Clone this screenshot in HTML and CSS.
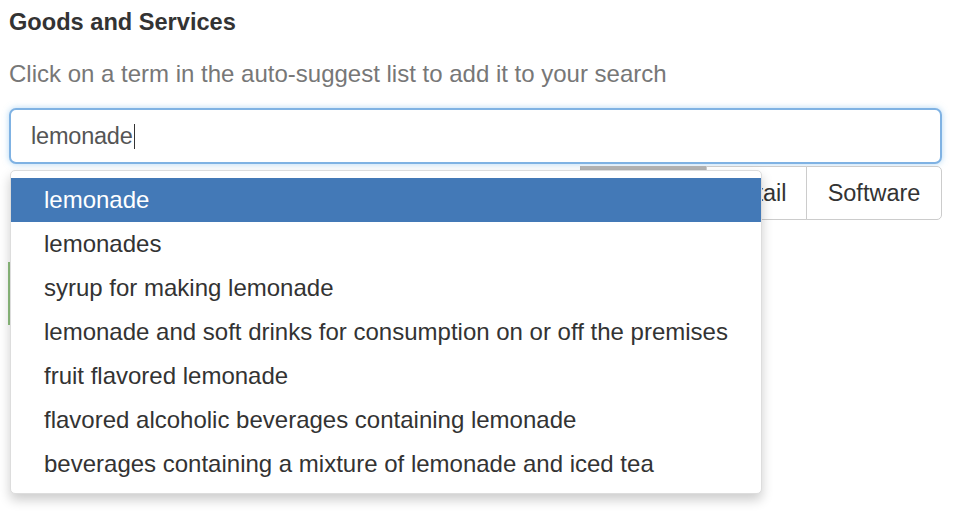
FILE: index.html
```html
<!DOCTYPE html>
<html>
<head>
<meta charset="utf-8">
<link rel="stylesheet" href="styles.css">
</head>
<body>
<div class="page">
  <h4 class="title">Goods and Services</h4>
  <p class="hint">Click on a term in the auto-suggest list to add it to your search</p>
  <div class="search">
    <div class="input"><span class="value">lemonade</span><span class="caret"></span></div>
    <div class="btn-row">
      <span class="btn active">Food</span>
      <span class="btn">Retail</span>
      <span class="btn last">Software</span>
    </div>
    <div class="green-box"></div>
    <ul class="dropdown">
      <li class="item selected">lemonade</li>
      <li class="item">lemonades</li>
      <li class="item">syrup for making lemonade</li>
      <li class="item">lemonade and soft drinks for consumption on or off the premises</li>
      <li class="item">fruit flavored lemonade</li>
      <li class="item">flavored alcoholic beverages containing lemonade</li>
      <li class="item">beverages containing a mixture of lemonade and iced tea</li>
    </ul>
  </div>
</div>
</body>
</html>
```
FILE: styles.css
```css
* { box-sizing: border-box; }
html, body { margin: 0; padding: 0; background: #fff; }
body { font-family: "Liberation Sans", Arial, sans-serif; color: #333; width: 960px; height: 524px; overflow: hidden; }
.page { padding: 0 18px 0 9px; }
.title { margin: 0; padding-top: 8px; font-size: 23.6px; line-height: 28px; font-weight: bold; color: #333; }
.hint { margin: 24px 0 0; font-size: 24px; line-height: 28px; color: #777; }
.search { position: relative; margin-top: 20px; }
.input { height: 56px; border: 2px solid #7fb2e3; border-radius: 7px; box-shadow: 0 0 6px rgba(102,175,233,0.5); padding-left: 20px; display: flex; align-items: center; background: #fff; }
.value { font-size: 23.5px; color: #555; letter-spacing: -0.2px; }
.caret { display: inline-block; width: 1px; height: 25px; background: #333; margin-left: 1px; }
.btn-row { display: flex; justify-content: flex-end; margin-top: 2px; height: 54px; }
.btn { display: flex; align-items: center; justify-content: center; border: 1px solid #ccc; margin-left: -1px; font-size: 23.5px; color: #333; background: #fff; }
.btn.active { width: 127px; background: #e6e6e6; border-color: #adadad; border-top: 4px solid #b3b3b3; }
.btn:nth-child(2) { width: 101px; }
.btn.last { width: 136px; border-radius: 0 5px 5px 0; }
.green-box { margin-top: 42px; width: 40px; height: 63px; border-left: 2px solid #8fbf7f; margin-left: -1px; }
.dropdown { position: absolute; left: 1px; top: 62px; width: 752px; margin: 0; padding: 7px 0; list-style: none; background: #fff; border: 1px solid #ddd; border-radius: 5px; box-shadow: 0 6px 12px rgba(0,0,0,0.2); }
.item { height: 44px; line-height: 44px; padding-left: 33px; font-size: 24px; color: #333; white-space: nowrap; }
.item.selected { background: #4379b7; color: #fff; }
```
